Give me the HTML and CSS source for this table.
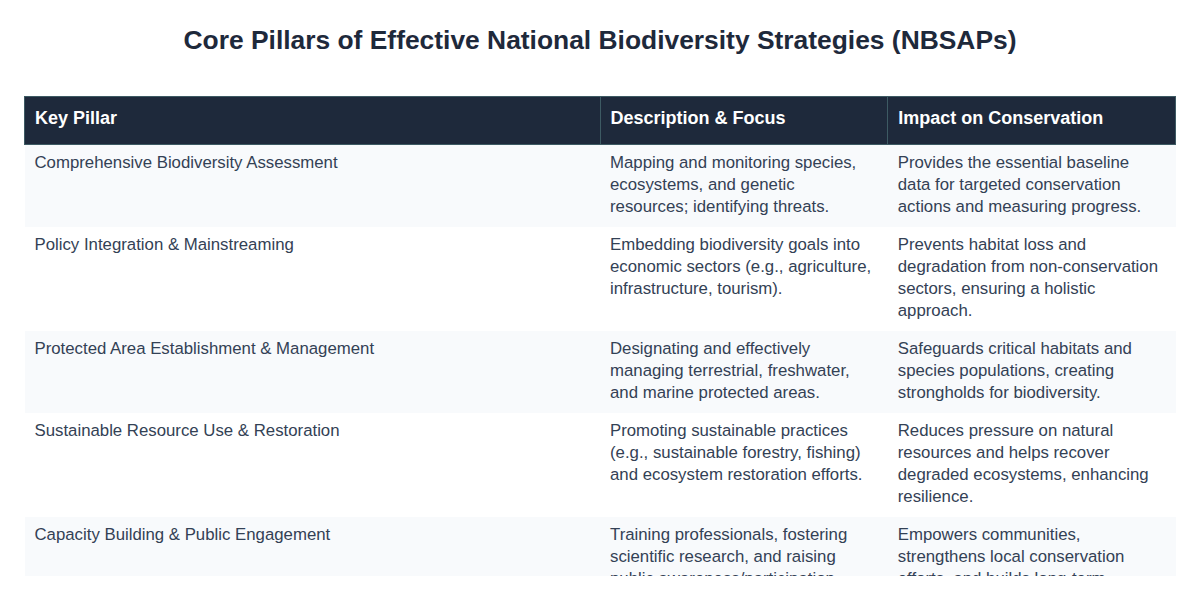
FILE: index.html
```html
<!DOCTYPE html>
<html lang="en">
<head>
<meta charset="utf-8">
<title>Core Pillars of Effective National Biodiversity Strategies (NBSAPs)</title>
<link rel="stylesheet" href="styles.css">
</head>
<body>
<main class="page">
  <h1 class="title">Core Pillars of Effective National Biodiversity Strategies (NBSAPs)</h1>
  <div class="table-wrap">
    <table class="pillars">
      <colgroup>
        <col class="c1"><col class="c2"><col class="c3">
      </colgroup>
      <thead>
        <tr>
          <th>Key Pillar</th>
          <th>Description &amp; Focus</th>
          <th>Impact on Conservation</th>
        </tr>
      </thead>
      <tbody>
        <tr>
          <td>Comprehensive Biodiversity Assessment</td>
          <td>Mapping and monitoring species, ecosystems, and genetic resources; identifying threats.</td>
          <td>Provides the essential baseline data for targeted conservation actions and measuring progress.</td>
        </tr>
        <tr>
          <td>Policy Integration &amp; Mainstreaming</td>
          <td>Embedding biodiversity goals into economic sectors (e.g., agriculture, infrastructure, tourism).</td>
          <td>Prevents habitat loss and degradation from non-conservation sectors, ensuring a holistic approach.</td>
        </tr>
        <tr>
          <td>Protected Area Establishment &amp; Management</td>
          <td>Designating and effectively managing terrestrial, freshwater, and marine protected areas.</td>
          <td>Safeguards critical habitats and species populations, creating strongholds for biodiversity.</td>
        </tr>
        <tr>
          <td>Sustainable Resource Use &amp; Restoration</td>
          <td>Promoting sustainable practices (e.g., sustainable forestry, fishing) and ecosystem restoration efforts.</td>
          <td>Reduces pressure on natural resources and helps recover degraded ecosystems, enhancing resilience.</td>
        </tr>
        <tr>
          <td>Capacity Building &amp; Public Engagement</td>
          <td>Training professionals, fostering scientific research, and raising public awareness/participation.</td>
          <td>Empowers communities, strengthens local conservation efforts, and builds long-term support.</td>
        </tr>
      </tbody>
    </table>
  </div>
</main>
</body>
</html>
```

FILE: styles.css
```css
html, body {
  margin: 0;
  padding: 0;
  background: #ffffff;
}

body {
  font-family: "Liberation Sans", Arial, sans-serif;
  color: #334155;
}

.page {
  padding: 24px 24px 0;
}

.title {
  margin: 0 0 40px;
  font-size: 26.4px;
  line-height: 32px;
  font-weight: 700;
  text-align: center;
  color: #1e293b;
}

.table-wrap {
  height: 480px;
  overflow: hidden;
}

.pillars {
  width: 100%;
  border-collapse: collapse;
  table-layout: fixed;
}

.c1 { width: 50%; }
.c2 { width: 25%; }
.c3 { width: 25%; }

.pillars th {
  background: #1e293b;
  color: #ffffff;
  font-size: 18px;
  line-height: 22px;
  font-weight: 700;
  text-align: left;
  padding: 10px 12px 15px 10px;
  border: 1px solid #3d5a63;
}

.pillars td {
  font-size: 16.8px;
  line-height: 22px;
  padding: 7px 12px 9px 10px;
  vertical-align: top;
  color: #334155;
}

.pillars tbody tr:nth-child(odd) {
  background: #f8fafc;
}
```
